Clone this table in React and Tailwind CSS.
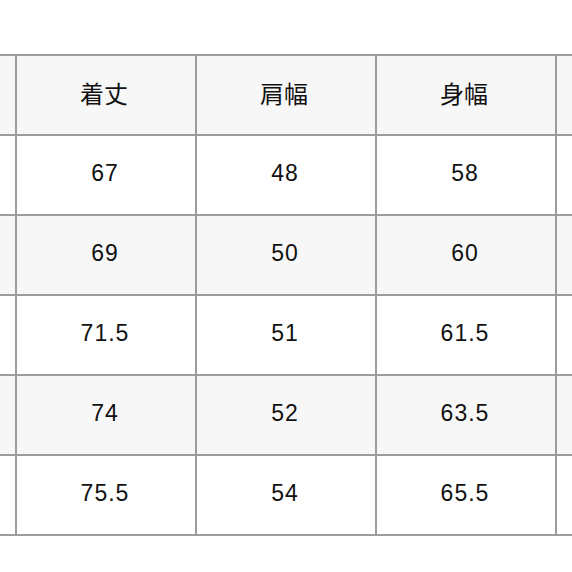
import React from "react";

const headers = ["サイズ", "着丈", "肩幅", "身幅", "袖丈"];
const rows = [
  ["S", "67", "48", "58", "60"],
  ["M", "69", "50", "60", "61"],
  ["L", "71.5", "51", "61.5", "62"],
  ["XL", "74", "52", "63.5", "63"],
  ["XXL", "75.5", "54", "65.5", "64"],
];

const App = () => {
  return (
    <div className="w-[572px] h-[572px] overflow-hidden bg-white text-[#111]">
      <div className="pt-[54px] ml-[-165px]">
        <div className="grid grid-cols-[178px_178px_178px_178px_178px] gap-[2px] p-[2px] bg-[#9c9c9c] w-max">
          {headers.map((h) => (
            <div
              key={h}
              className="h-[78px] flex items-center justify-center pb-[5px] pr-[4px] bg-[#f7f7f7] text-[24px] leading-none"
              style={{ fontFamily: '"Noto Sans CJK JP", "Liberation Sans", sans-serif' }}
            >
              {h}
            </div>
          ))}
          {rows.map((row, i) =>
            row.map((cell, j) => (
              <div
                key={`${i}-${j}`}
                className={`h-[78px] flex items-center justify-center pb-[3px] pr-[2px] text-[23px] tracking-[1px] leading-none ${
                  i % 2 === 1 ? "bg-[#f7f7f7]" : "bg-white"
                }`}
                style={{ fontFamily: '"Liberation Sans", Arial, sans-serif' }}
              >
                {cell}
              </div>
            ))
          )}
        </div>
      </div>
    </div>
  );
};

export default App;
